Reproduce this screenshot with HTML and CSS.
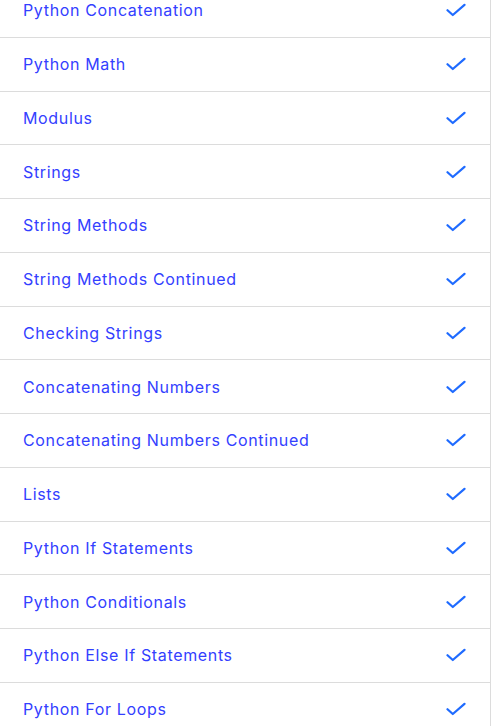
FILE: index.html
```html
<!DOCTYPE html>
<html>
<head>
<meta charset="utf-8">
<link rel="stylesheet" href="styles.css">
</head>
<body>
<div class="panel">
  <ul class="lessons">
    <li class="lesson"><span class="title">Python Concatenation</span><svg class="check" viewBox="0 0 20 14"><path d="M1.5 7.2 L6.8 12 L18.5 1.8"/></svg></li>
    <li class="lesson"><span class="title">Python Math</span><svg class="check" viewBox="0 0 20 14"><path d="M1.5 7.2 L6.8 12 L18.5 1.8"/></svg></li>
    <li class="lesson"><span class="title">Modulus</span><svg class="check" viewBox="0 0 20 14"><path d="M1.5 7.2 L6.8 12 L18.5 1.8"/></svg></li>
    <li class="lesson"><span class="title">Strings</span><svg class="check" viewBox="0 0 20 14"><path d="M1.5 7.2 L6.8 12 L18.5 1.8"/></svg></li>
    <li class="lesson"><span class="title">String Methods</span><svg class="check" viewBox="0 0 20 14"><path d="M1.5 7.2 L6.8 12 L18.5 1.8"/></svg></li>
    <li class="lesson"><span class="title">String Methods Continued</span><svg class="check" viewBox="0 0 20 14"><path d="M1.5 7.2 L6.8 12 L18.5 1.8"/></svg></li>
    <li class="lesson"><span class="title">Checking Strings</span><svg class="check" viewBox="0 0 20 14"><path d="M1.5 7.2 L6.8 12 L18.5 1.8"/></svg></li>
    <li class="lesson"><span class="title">Concatenating Numbers</span><svg class="check" viewBox="0 0 20 14"><path d="M1.5 7.2 L6.8 12 L18.5 1.8"/></svg></li>
    <li class="lesson"><span class="title">Concatenating Numbers Continued</span><svg class="check" viewBox="0 0 20 14"><path d="M1.5 7.2 L6.8 12 L18.5 1.8"/></svg></li>
    <li class="lesson"><span class="title">Lists</span><svg class="check" viewBox="0 0 20 14"><path d="M1.5 7.2 L6.8 12 L18.5 1.8"/></svg></li>
    <li class="lesson"><span class="title">Python If Statements</span><svg class="check" viewBox="0 0 20 14"><path d="M1.5 7.2 L6.8 12 L18.5 1.8"/></svg></li>
    <li class="lesson"><span class="title">Python Conditionals</span><svg class="check" viewBox="0 0 20 14"><path d="M1.5 7.2 L6.8 12 L18.5 1.8"/></svg></li>
    <li class="lesson"><span class="title">Python Else If Statements</span><svg class="check" viewBox="0 0 20 14"><path d="M1.5 7.2 L6.8 12 L18.5 1.8"/></svg></li>
    <li class="lesson"><span class="title">Python For Loops</span><svg class="check" viewBox="0 0 20 14"><path d="M1.5 7.2 L6.8 12 L18.5 1.8"/></svg></li>
  </ul>
</div>
</body>
</html>
```
FILE: styles.css
```css
html, body {
  margin: 0;
  padding: 0;
  background: #ffffff;
  overflow: hidden;
}
.panel {
  width: 490px;
  height: 726px;
  border-right: 1px solid #dcdcdc;
  overflow: hidden;
}
.lessons {
  list-style: none;
  margin: -16px 0 0 0;
  padding: 0;
}
.lesson {
  height: 52.75px;
  display: flex;
  align-items: center;
  justify-content: space-between;
  padding: 0 24px 0 23px;
  border-bottom: 1px solid #dcdcdc;
}
.title {
  font-family: Inter, "Noto Sans", sans-serif;
  font-size: 16px;
  font-weight: 400;
  color: #3340ff;
  letter-spacing: 0.65px;
}
.check {
  width: 20px;
  height: 14px;
  fill: none;
  stroke: #1f6bff;
  stroke-width: 2.2;
  stroke-linecap: round;
  stroke-linejoin: round;
}
```
